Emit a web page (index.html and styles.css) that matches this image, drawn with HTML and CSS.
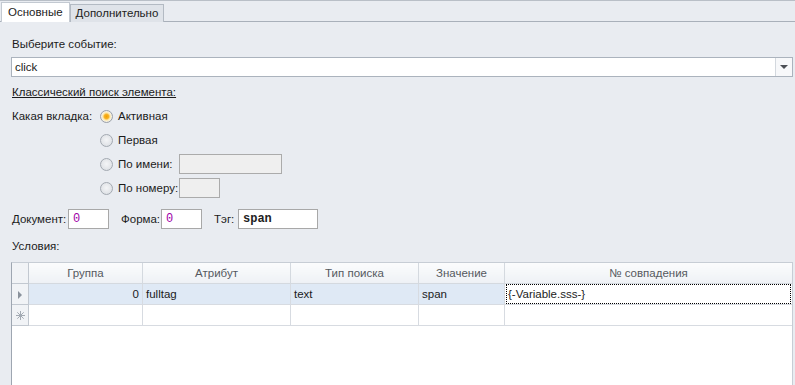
FILE: index.html
```html
<!DOCTYPE html>
<html lang="ru">
<head>
  <meta charset="UTF-8" />
  <title>Действие</title>
  <link rel="stylesheet" href="styles.css">
</head>
<body>
  <div class="tabs">
    <span class="tab active">Основные</span>
    <span class="tab">Дополнительно</span>
  </div>

  <div class="content">
    <div class="label-event">Выберите событие:</div>
    <div class="combo">
      <span class="combo-text">click</span>
      <span class="combo-btn"><span class="arrow"></span></span>
    </div>

    <div class="section-link">Классический поиск элемента:</div>

    <div class="tab-choice">
      <div class="choice-label">Какая вкладка:</div>
      <div class="radios">
        <div class="radio-row">
          <span class="radio checked"></span><span class="radio-text">Активная</span>
        </div>
        <div class="radio-row">
          <span class="radio"></span><span class="radio-text">Первая</span>
        </div>
        <div class="radio-row">
          <span class="radio"></span><span class="radio-text">По имени:</span>
          <span class="field disabled wide"></span>
        </div>
        <div class="radio-row">
          <span class="radio"></span><span class="radio-text">По номеру:</span>
          <span class="field disabled narrow"></span>
        </div>
      </div>
    </div>

    <div class="doc-row">
      <span class="doc-label doc">Документ:</span>
      <span class="field num">0</span>
      <span class="doc-label form">Форма:</span>
      <span class="field num">0</span>
      <span class="doc-label tag-label">Тэг:</span>
      <span class="field tag">span</span>
    </div>

    <div class="label-cond">Условия:</div>

    <div class="grid">
      <table>
        <thead>
          <tr>
            <th class="ind"></th>
            <th class="c-group">Группа</th>
            <th class="c-attr">Атрибут</th>
            <th class="c-type">Тип поиска</th>
            <th class="c-value">Значение</th>
            <th>№ совпадения</th>
          </tr>
        </thead>
        <tbody>
          <tr class="current">
            <td class="ind"><span class="tri"></span></td>
            <td class="right">0</td>
            <td>fulltag</td>
            <td>text</td>
            <td>span</td>
            <td class="focus"><span class="focus-box">{-Variable.sss-}</span></td>
          </tr>
          <tr class="new-row">
            <td class="ind">
              <svg width="9" height="9" viewBox="0 0 9 9">
                <g stroke="#a3aab3" stroke-width="1">
                  <line x1="4.5" y1="0" x2="4.5" y2="9"/>
                  <line x1="0" y1="4.5" x2="9" y2="4.5"/>
                  <line x1="1.3" y1="1.3" x2="7.7" y2="7.7"/>
                  <line x1="7.7" y1="1.3" x2="1.3" y2="7.7"/>
                </g>
              </svg>
            </td>
            <td></td>
            <td></td>
            <td></td>
            <td></td>
            <td></td>
          </tr>
        </tbody>
      </table>
    </div>
  </div>
</body>
</html>
```

FILE: styles.css
```css
html, body {
  margin: 0;
  padding: 0;
}
body {
  width: 795px;
  height: 385px;
  overflow: hidden;
  background-color: #e9ecf1;
  font-family: "Liberation Sans", Arial, sans-serif;
  font-size: 11.5px;
  color: #1b1b1b;
}
.tabs {
  height: 22px;
  border-top: 1px solid #b9bfc7;
  border-bottom: 1px solid #a9b0ba;
  display: flex;
  align-items: flex-end;
  padding-left: 1px;
  box-sizing: border-box;
}
.tab {
  height: 18px;
  line-height: 17px;
  padding: 0 5px;
  border: 1px solid #b3bac3;
  border-bottom: none;
  background-color: #dfe3e9;
  color: #222;
  margin-bottom: -1px;
  box-sizing: border-box;
}
.tab.active {
  height: 20px;
  line-height: 19px;
  padding: 0 6px;
  background-color: #fff;
  border-color: #c3c9d1;
}
.content {
  padding: 0 2px 0 11px;
}
.label-event {
  margin-top: 14px;
  line-height: 16px;
  padding-left: 1px;
}
.combo {
  margin-top: 5px;
  height: 20px;
  border: 1px solid #abb3bd;
  background-color: #fff;
  display: flex;
  box-sizing: border-box;
}
.combo-text {
  flex: 1;
  line-height: 18px;
  padding-left: 3px;
}
.combo-btn {
  width: 16px;
  border-left: 1px solid #d3d8de;
  background-color: #f7f8fa;
  display: flex;
  align-items: center;
  justify-content: center;
}
.arrow {
  width: 0;
  height: 0;
  border-left: 4px solid transparent;
  border-right: 4px solid transparent;
  border-top: 4px solid #4b4f55;
}
.section-link {
  margin-top: 7px;
  line-height: 16px;
  padding-left: 1px;
  text-decoration: underline;
}
.tab-choice {
  margin-top: 6px;
  display: flex;
}
.choice-label {
  width: 88px;
  padding-left: 1px;
  line-height: 20px;
}
.radios {
  display: flex;
  flex-direction: column;
  gap: 4px;
}
.radio-row {
  height: 20px;
  display: flex;
  align-items: center;
}
.radio {
  flex: none;
  width: 13px;
  height: 13px;
  border-radius: 50%;
  box-sizing: border-box;
  border: 1px solid #a3a9b1;
  background: radial-gradient(circle at 50% 45%, #f4f5f7 0, #e0e3e7 70%, #d3d7dc 100%);
}
.radio.checked {
  border-color: #9aa0a8;
  background: radial-gradient(circle, #f2a000 0, #f6b226 2.2px, #fde7a6 3.6px, #f7f1e0 4.8px, #e6e6e6 6px);
}
.radio-text {
  width: 61px;
  padding-left: 5px;
  white-space: nowrap;
}
.field {
  flex: none;
  height: 20px;
  border: 1px solid #a8a8a8;
  background-color: #fff;
  box-sizing: border-box;
  line-height: 18px;
  padding-left: 4px;
}
.field.disabled {
  background-color: #efefef;
  border-color: #ababab;
}
.field.wide {
  width: 103px;
}
.field.narrow {
  width: 41px;
}
.doc-row {
  margin-top: 11px;
  display: flex;
  align-items: center;
  padding-left: 1px;
}
.doc-label {
  flex: none;
  white-space: nowrap;
}
.doc-label.doc {
  width: 56px;
}
.doc-label.form {
  width: 40px;
  margin-left: 12px;
}
.doc-label.tag-label {
  width: 24px;
  margin-left: 12px;
}
.field.num {
  width: 41px;
  color: #a000a8;
  font-family: "Liberation Mono", "Courier New", monospace;
  font-size: 12px;
}
.field.tag {
  width: 80px;
  font-family: "Liberation Mono", "Courier New", monospace;
  font-size: 12px;
  font-weight: bold;
  color: #222;
}
.label-cond {
  margin-top: 9px;
  line-height: 16px;
  padding-left: 1px;
}
.grid {
  margin-top: 8px;
  height: 130px;
  background-color: #fff;
  border-left: 1px solid #9ea6b1;
  border-top: 1px solid #c7cdd5;
  border-right: 1px solid #c7cdd5;
}
table {
  width: 100%;
  border-collapse: collapse;
  table-layout: fixed;
}
th, td {
  height: 20px;
  padding: 0 3px;
  border: 1px solid #d7dbe1;
  border-top: none;
  white-space: nowrap;
  overflow: hidden;
  text-align: left;
  font-weight: normal;
}
th {
  height: 20px;
  text-align: center;
  color: #55595f;
  background: linear-gradient(#fbfcfd, #eef1f5);
  border-color: #d4d9df;
}
th:first-child, td:first-child {
  border-left: none;
}
th:last-child, td:last-child {
  border-right: none;
}
.ind {
  width: 16px;
  padding: 0;
  text-align: center;
  background: #f1f3f6;
  border-color: #c2c8d0;
}
.c-group { width: 107px; }
.c-attr { width: 141px; }
.c-type { width: 121px; }
.c-value { width: 79px; }
.right {
  text-align: right;
}
tr.current td {
  background-color: #dfe9f5;
}
tr.current td.ind {
  background-color: #f1f3f6;
}
tr.current td.focus {
  background-color: #fff;
  padding: 0;
}
.focus-box {
  display: block;
  height: 18px;
  line-height: 18px;
  margin: 0 1px;
  padding-left: 1px;
  border: 1px dotted #000;
}
.tri {
  display: inline-block;
  width: 0;
  height: 0;
  border-top: 4px solid transparent;
  border-bottom: 4px solid transparent;
  border-left: 4px solid #8a929c;
  vertical-align: middle;
}
tr.new-row td.ind svg {
  vertical-align: middle;
}
```
